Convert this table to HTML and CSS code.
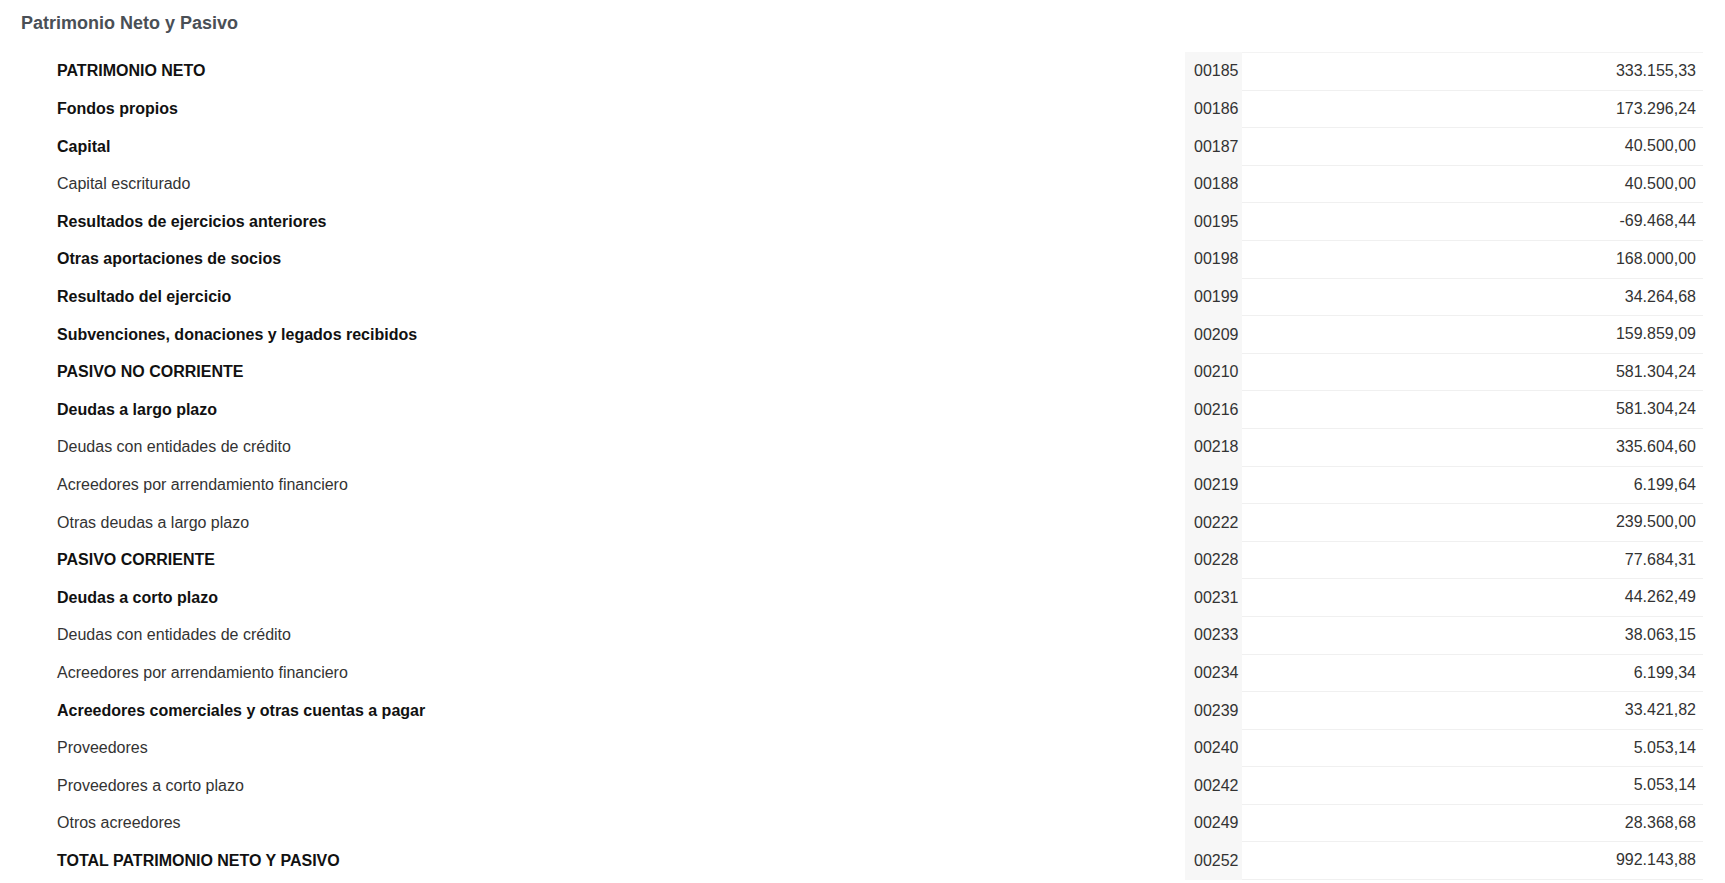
FILE: index.html
```html
<!DOCTYPE html>
<html lang="es">
<head>
    <meta charset="UTF-8">
    <meta name="viewport" content="width=device-width, initial-scale=1.0">
    <title>Patrimonio Neto y Pasivo</title>
    <link rel="stylesheet" href="styles.css">
</head>
<body>

    <div class="section">
        <h2 class="section-title">Patrimonio Neto y Pasivo</h2>
        <table class="balance">
            <tbody>
                <tr class="strong"><td class="label">PATRIMONIO NETO</td><td class="code">00185</td><td class="value">333.155,33</td></tr>
                <tr class="strong"><td class="label">Fondos propios</td><td class="code">00186</td><td class="value">173.296,24</td></tr>
                <tr class="strong"><td class="label">Capital</td><td class="code">00187</td><td class="value">40.500,00</td></tr>
                <tr><td class="label">Capital escriturado</td><td class="code">00188</td><td class="value">40.500,00</td></tr>
                <tr class="strong"><td class="label">Resultados de ejercicios anteriores</td><td class="code">00195</td><td class="value">-69.468,44</td></tr>
                <tr class="strong"><td class="label">Otras aportaciones de socios</td><td class="code">00198</td><td class="value">168.000,00</td></tr>
                <tr class="strong"><td class="label">Resultado del ejercicio</td><td class="code">00199</td><td class="value">34.264,68</td></tr>
                <tr class="strong"><td class="label">Subvenciones, donaciones y legados recibidos</td><td class="code">00209</td><td class="value">159.859,09</td></tr>
                <tr class="strong"><td class="label">PASIVO NO CORRIENTE</td><td class="code">00210</td><td class="value">581.304,24</td></tr>
                <tr class="strong"><td class="label">Deudas a largo plazo</td><td class="code">00216</td><td class="value">581.304,24</td></tr>
                <tr><td class="label">Deudas con entidades de crédito</td><td class="code">00218</td><td class="value">335.604,60</td></tr>
                <tr><td class="label">Acreedores por arrendamiento financiero</td><td class="code">00219</td><td class="value">6.199,64</td></tr>
                <tr><td class="label">Otras deudas a largo plazo</td><td class="code">00222</td><td class="value">239.500,00</td></tr>
                <tr class="strong"><td class="label">PASIVO CORRIENTE</td><td class="code">00228</td><td class="value">77.684,31</td></tr>
                <tr class="strong"><td class="label">Deudas a corto plazo</td><td class="code">00231</td><td class="value">44.262,49</td></tr>
                <tr><td class="label">Deudas con entidades de crédito</td><td class="code">00233</td><td class="value">38.063,15</td></tr>
                <tr><td class="label">Acreedores por arrendamiento financiero</td><td class="code">00234</td><td class="value">6.199,34</td></tr>
                <tr class="strong"><td class="label">Acreedores comerciales y otras cuentas a pagar</td><td class="code">00239</td><td class="value">33.421,82</td></tr>
                <tr><td class="label">Proveedores</td><td class="code">00240</td><td class="value">5.053,14</td></tr>
                <tr><td class="label">Proveedores a corto plazo</td><td class="code">00242</td><td class="value">5.053,14</td></tr>
                <tr><td class="label">Otros acreedores</td><td class="code">00249</td><td class="value">28.368,68</td></tr>
                <tr class="strong"><td class="label">TOTAL PATRIMONIO NETO Y PASIVO</td><td class="code">00252</td><td class="value">992.143,88</td></tr>
            </tbody>
        </table>
    </div>

</body>
</html>
```

FILE: styles.css
```css
body {
    font-family: 'Liberation Sans', Arial, sans-serif;
    background-color: #fff;
    color: #333;
    margin: 0;
}
.section {
    padding: 12px 22px 0 21px;
}
.section-title {
    font-size: 18px;
    font-weight: bold;
    line-height: 22px;
    color: #4a4f56;
    margin: 0 0 18px 0;
}
.balance {
    margin-left: 27px;
    width: calc(100% - 27px);
    border-collapse: separate;
    border-spacing: 0;
    font-size: 16px;
}
.balance td {
    padding: 8px 9px;
    line-height: 20.6px;
    vertical-align: middle;
}
.balance .label {
    color: #333;
}
.balance .strong .label {
    font-weight: bold;
    color: #111;
}
.balance .code {
    width: 48px;
    padding: 8px 0 8px 9px;
    background-color: #f7f7f7;
    color: #333;
}
.balance .value {
    width: 445px;
    padding-right: 7px;
    text-align: right;
    color: #333;
    border-bottom: 1px solid #f0f0f0;
}
.balance tr:first-child .value {
    border-top: 1px solid #f3f3f3;
}
```
